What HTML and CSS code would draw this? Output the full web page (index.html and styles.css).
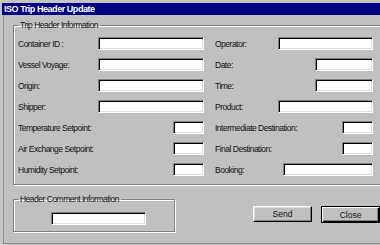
FILE: index.html
```html
<!DOCTYPE html>
<html>
<head>
<meta charset="utf-8">
<link rel="stylesheet" href="styles.css">
</head>
<body>
<div class="window">
  <div class="titlebar">ISO Trip Header Update</div>
  <div class="client">
    <fieldset class="group trip">
      <legend>Trip Header Information</legend>
      <div class="grid">
        <div class="field"><span>Container ID :</span><input class="tb w106"></div>
        <div class="field"><span>Operator:</span><input class="tb w95"></div>
        <div class="field"><span>Vessel Voyage:</span><input class="tb w106"></div>
        <div class="field"><span>Date:</span><input class="tb w58"></div>
        <div class="field"><span>Origin:</span><input class="tb w106"></div>
        <div class="field"><span>Time:</span><input class="tb w58"></div>
        <div class="field"><span>Shipper:</span><input class="tb w106"></div>
        <div class="field"><span>Product:</span><input class="tb w95"></div>
        <div class="field"><span>Temperature Setpoint:</span><input class="tb w31"></div>
        <div class="field"><span>Intermediate Destination:</span><input class="tb w31"></div>
        <div class="field"><span>Air Exchange Setpoint:</span><input class="tb w31"></div>
        <div class="field"><span>Final Destination:</span><input class="tb w31"></div>
        <div class="field"><span>Humidity Setpoint:</span><input class="tb w31"></div>
        <div class="field"><span>Booking:</span><input class="tb w90"></div>
      </div>
    </fieldset>
    <div class="bottom">
      <fieldset class="group comment">
        <legend>Header Comment Information</legend>
        <input class="tb w95 comment-input">
      </fieldset>
      <div class="buttons">
        <button class="btn">Send</button>
        <button class="btn default">Close</button>
      </div>
    </div>
  </div>
</div>
</body>
</html>
```

FILE: styles.css
```css
html, body {
  margin: 0;
  padding: 0;
  width: 380px;
  height: 245px;
  overflow: hidden;
  background: #c0c0c0;
}

.window {
  box-sizing: border-box;
  width: 380px;
  height: 245px;
  padding: 3px 0 0 2px;
  background: #c4c4c4;
  font-family: "Liberation Sans", Arial, sans-serif;
  font-size: 8.5px;
  letter-spacing: -0.5px;
  color: #111;
}

.titlebar {
  height: 12px;
  line-height: 12px;
  background: #000080;
  color: #fff;
  font-weight: bold;
  font-size: 9px;
  letter-spacing: -0.45px;
  padding-left: 2px;
  white-space: nowrap;
}

.client {
  box-sizing: border-box;
  margin-left: 1px;
  height: 229px;
  background: #c0c0c0;
  border-left: 1px solid #8c8c8c;
  border-bottom: 1px solid #8c8c8c;
  overflow: hidden;
}

.group {
  border: 1px solid #808080;
  box-shadow: 1px 1px 0 #fff, inset 1px 1px 0 #fff;
  min-width: 0;
}

.group legend {
  padding: 0 2px;
  line-height: 10px;
  height: 10px;
  white-space: nowrap;
  color: #111;
}

.trip {
  box-sizing: border-box;
  width: 400px;
  margin: 5px 0 0 9px;
  padding: 7px 0 8px 4px;
}

.grid {
  display: grid;
  grid-template-columns: 186px 158px;
  grid-auto-rows: 13px;
  column-gap: 11px;
  row-gap: 8px;
}

.field {
  display: flex;
  align-items: center;
  justify-content: space-between;
  white-space: nowrap;
}

.tb {
  box-sizing: border-box;
  height: 13px;
  margin: 0;
  padding: 0;
  background: #fff;
  border-style: solid;
  border-width: 1px;
  border-color: #808080 #fff #fff #808080;
  box-shadow: inset 1px 1px 0 #000, inset -1px -1px 0 #dfdfdf;
  font: inherit;
  outline: none;
}

.w106 { width: 106px; }
.w95 { width: 95px; }
.w90 { width: 90px; }
.w58 { width: 58px; }
.w31 { width: 31px; }

.bottom {
  display: flex;
  align-items: flex-start;
  margin-top: 9px;
}

.comment {
  box-sizing: border-box;
  width: 166px;
  margin: 0 0 0 9px;
  padding: 8px 0 6px 4px;
}

.comment-input {
  display: block;
  margin-left: 33px;
}

.buttons {
  display: flex;
  align-items: flex-start;
  gap: 9px;
  margin: 12px 0 0 78px;
}

.btn {
  box-sizing: border-box;
  width: 59px;
  height: 16px;
  margin: 0;
  padding: 0;
  background: #c0c0c0;
  border: 1px solid;
  border-color: #fff #000 #000 #fff;
  box-shadow: inset -1px -1px 0 #808080, inset 1px 1px 0 #dfdfdf;
  font: inherit;
  color: #111;
  text-align: center;
  flex: none;
}

.btn.default {
  height: 17px;
  border: 1px solid #000;
  box-shadow: inset 1px 1px 0 #fff, inset -1px -1px 0 #000, inset -2px -2px 0 #808080;
}
```
